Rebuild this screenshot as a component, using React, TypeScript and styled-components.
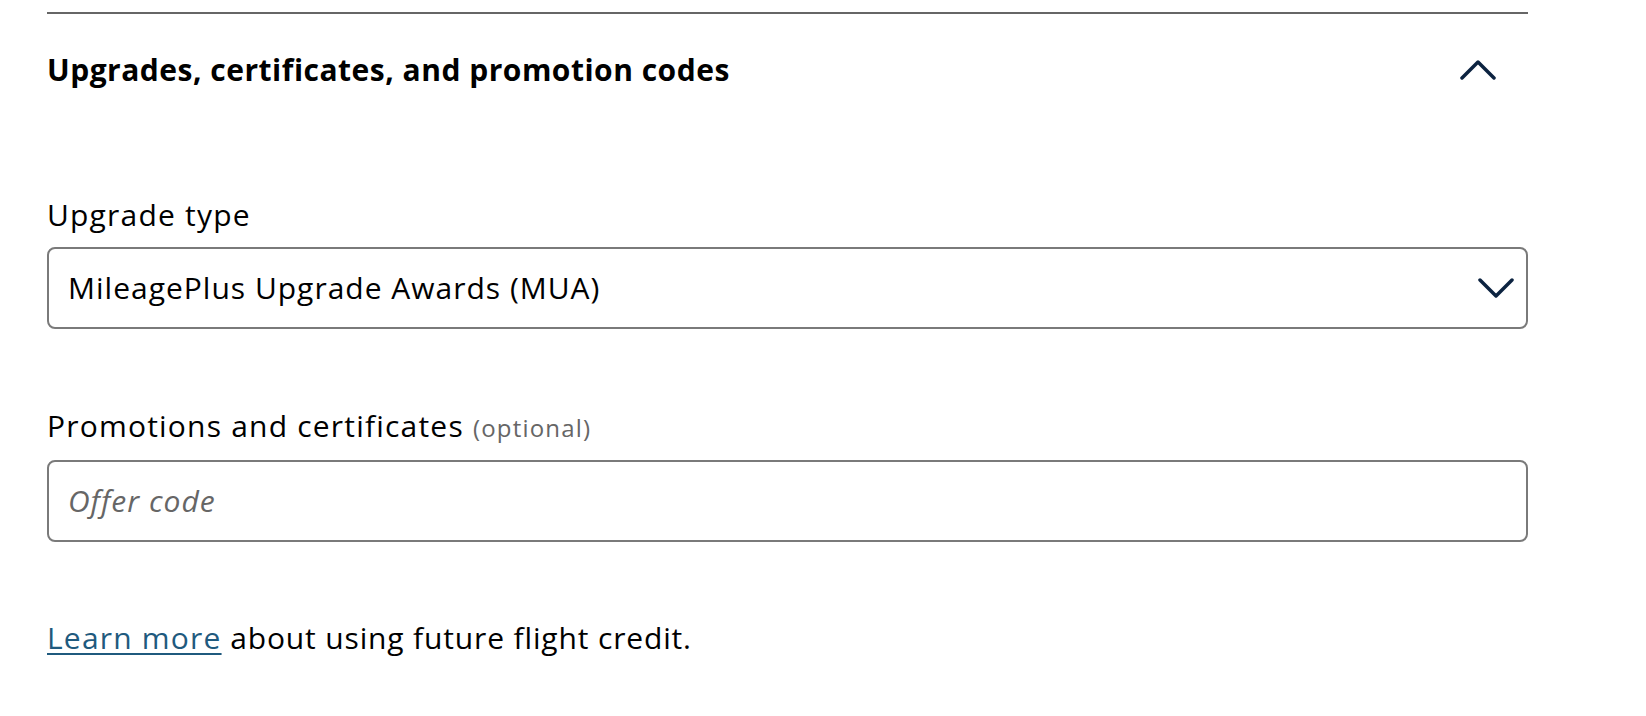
import React from "react";
import styled, { createGlobalStyle } from "styled-components";

const GlobalStyle = createGlobalStyle`
  html, body {
    margin: 0;
    padding: 0;
    background: #ffffff;
  }
  body {
    font-family: "Open Sans", "Noto Sans", Arial, sans-serif;
    color: #000000;
  }
`;

const Page = styled.div`
  padding: 12px 0 0 47px;
  width: 1481px;
`;

const Section = styled.section`
  border-top: 2px solid #666666;
`;

const Header = styled.div`
  display: flex;
  align-items: center;
  justify-content: space-between;
  padding: 36px 32px 0 0;
`;

const Heading = styled.h2`
  margin: 0;
  font-size: 30px;
  line-height: 40px;
  font-weight: 700;
  letter-spacing: 0.5px;
  color: #000000;
`;

const IconButton = styled.button`
  display: flex;
  align-items: center;
  justify-content: center;
  width: 36px;
  height: 40px;
  padding: 0;
  border: none;
  background: transparent;
  cursor: pointer;
`;

const Body = styled.div`
  display: flex;
  flex-direction: column;
  padding-top: 105px;
`;

const Field = styled.div<{ $gapAfter: number }>`
  display: flex;
  flex-direction: column;
  gap: 12px;
  margin-bottom: ${(p) => p.$gapAfter}px;
`;

const Label = styled.label`
  font-size: 30px;
  line-height: 40px;
  font-weight: 400;
  letter-spacing: 1.2px;
  color: #000000;
`;

const Optional = styled.span`
  font-size: 24px;
  color: #666666;
`;

const Box = styled.div`
  box-sizing: border-box;
  height: 82px;
  display: flex;
  align-items: center;
  justify-content: space-between;
  border: 2px solid #7a7a7a;
  border-radius: 8px;
  padding: 0 12px 0 19px;
  background: #ffffff;
`;

const BoxText = styled.span<{ $placeholder?: boolean }>`
  font-size: 30px;
  line-height: 40px;
  letter-spacing: 1px;
  color: ${(p) => (p.$placeholder ? "#666666" : "#000000")};
  font-style: ${(p) => (p.$placeholder ? "italic" : "normal")};
`;

const Note = styled.p`
  margin: 0;
  font-size: 30px;
  line-height: 40px;
  letter-spacing: 0.85px;
  color: #000000;
`;

const Link = styled.a`
  color: #1f5a7e;
  letter-spacing: 1.2px;
  text-decoration: underline;
  text-decoration-thickness: 2px;
  text-underline-offset: 4px;
`;

const ChevronUp = () => (
  <svg width="36" height="22" viewBox="0 0 36 22" fill="none">
    <path
      d="M2 19 L18 3 L34 19"
      stroke="#0c2340"
      strokeWidth="3.5"
      strokeLinecap="round"
      strokeLinejoin="round"
    />
  </svg>
);

const ChevronDown = () => (
  <svg width="36" height="22" viewBox="0 0 36 22" fill="none">
    <path
      d="M2 3 L18 19 L34 3"
      stroke="#0c2340"
      strokeWidth="3.5"
      strokeLinecap="round"
      strokeLinejoin="round"
    />
  </svg>
);

export default function App() {
  return (
    <>
      <GlobalStyle />
      <Page>
        <Section>
          <Header>
            <Heading>Upgrades, certificates, and promotion codes</Heading>
            <IconButton aria-label="Collapse">
              <ChevronUp />
            </IconButton>
          </Header>
          <Body>
            <Field $gapAfter={77}>
              <Label>Upgrade type</Label>
              <Box>
                <BoxText>MileagePlus Upgrade Awards (MUA)</BoxText>
                <ChevronDown />
              </Box>
            </Field>
            <Field $gapAfter={76}>
              <Label>
                Promotions and certificates <Optional>(optional)</Optional>
              </Label>
              <Box>
                <BoxText $placeholder>Offer code</BoxText>
              </Box>
            </Field>
            <Note>
              <Link href="#">Learn more</Link> about using future flight credit.
            </Note>
          </Body>
        </Section>
      </Page>
    </>
  );
}
